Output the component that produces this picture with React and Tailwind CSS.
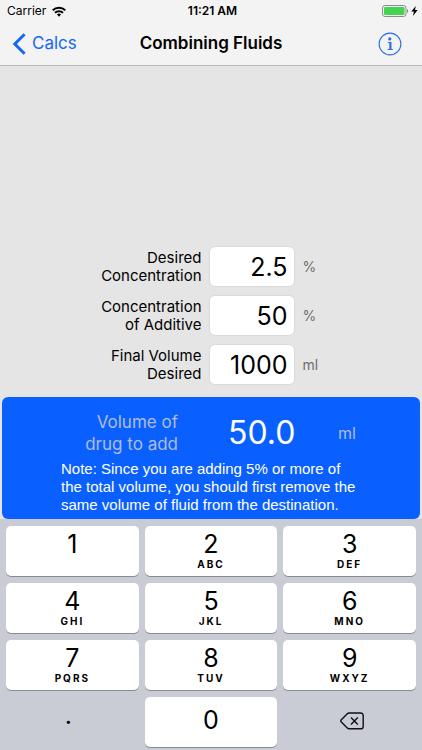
import { useState } from "react";

const FIELDS = [
  { id: "desired", lines: ["Desired", "Concentration"], unit: "%" },
  { id: "additive", lines: ["Concentration", "of Additive"], unit: "%" },
  { id: "volume", lines: ["Final Volume", "Desired"], unit: "ml" },
];

const KEYS = [
  { digit: "1", letters: "" },
  { digit: "2", letters: "ABC" },
  { digit: "3", letters: "DEF" },
  { digit: "4", letters: "GHI" },
  { digit: "5", letters: "JKL" },
  { digit: "6", letters: "MNO" },
  { digit: "7", letters: "PQRS" },
  { digit: "8", letters: "TUV" },
  { digit: "9", letters: "WXYZ" },
];

function StatusBar() {
  return (
    <div className="grid h-[22px] grid-cols-3 items-center pr-1 pl-[7px] text-xs">
      <div className="flex items-center gap-[6px]">
        <span>Carrier</span>
        <svg width="14" height="11" viewBox="0 0 14 11" aria-hidden="true">
          <g fill="none" stroke="#000" strokeWidth="2">
            <path d="M0.7 4.2a9 9 0 0 1 12.6 0" />
            <path d="M3 6.8a5.7 5.7 0 0 1 8 0" />
          </g>
          <path d="M7 10.8L4.9 8.6a3 3 0 0 1 4.2 0z" />
        </svg>
      </div>
      <span className="text-center font-semibold">11:21 AM</span>
      <div className="flex items-center justify-end gap-[2px]">
        <svg width="27" height="12" viewBox="0 0 27 12" aria-hidden="true">
          <rect x="0.5" y="0.5" width="23.5" height="11" rx="2.5" fill="none" stroke="#8c8c8c" />
          <rect x="2" y="2" width="20.5" height="8" rx="1.3" fill="#43d551" />
          <path d="M25 4v4c1.6-0.8 1.6-3.2 0-4z" fill="#8c8c8c" />
        </svg>
        <svg width="7" height="10" viewBox="0 0 7 10" aria-hidden="true">
          <path d="M4.8 0L0.3 5.6h2.6L1.9 10l4.8-5.9H4z" />
        </svg>
      </div>
    </div>
  );
}

function NavBar() {
  return (
    <nav className="grid h-[43px] grid-cols-[1fr_auto_1fr] items-center px-3">
      <a href="#calcs" className="flex items-center gap-[6px] text-[17px] text-[#1468f5]">
        <svg width="14" height="22" viewBox="0 0 14 22" fill="none" aria-hidden="true">
          <path d="M12.6 1.2L2.8 11l9.8 9.8" stroke="#1468f5" strokeWidth="3" />
        </svg>
        Calcs
      </a>
      <h1 className="text-[17px] font-semibold">Combining Fluids</h1>
      <button type="button" aria-label="Info" className="mr-2 justify-self-end">
        <svg width="24" height="24" viewBox="0 0 24 24" fill="none" stroke="#2a6fe8">
          <circle cx="12" cy="12" r="10.9" strokeWidth="1.1" />
          <circle cx="11.8" cy="6.9" r="1.6" fill="#2a6fe8" stroke="none" />
          <path d="M12.4 10v7.6" strokeWidth="2.2" />
          <path d="M9.8 10.4h3M9.6 17.5h5.2" strokeWidth="1" />
        </svg>
      </button>
    </nav>
  );
}

function Keypad({ onKey, onDelete }) {
  return (
    <div className="grid grid-cols-3 gap-x-[6px] gap-y-[7px] bg-[#c9cbd5] px-[6px] pt-[7px] pb-[3px]">
      {KEYS.map((key) => (
        <button
          key={key.digit}
          type="button"
          onClick={() => onKey(key.digit)}
          className="flex h-[50px] flex-col items-center rounded-[5px] bg-white pt-1 shadow-[0_1px_0_#898b90]"
        >
          <span className="text-[25px] leading-7">{key.digit}</span>
          <span className="text-[10px] leading-3 font-bold tracking-[2px]">{key.letters}</span>
        </button>
      ))}
      <button type="button" onClick={() => onKey(".")} className="h-[50px] pr-2 pb-3 text-[25px]">
        .
      </button>
      <button
        type="button"
        onClick={() => onKey("0")}
        className="h-[50px] rounded-[5px] bg-white pb-[2px] text-[25px] shadow-[0_1px_0_#898b90]"
      >
        0
      </button>
      <button
        type="button"
        aria-label="Delete"
        onClick={onDelete}
        className="flex h-[50px] items-center justify-center pb-[2px] pl-1"
      >
        <svg width="24" height="18" viewBox="0 0 24 18" fill="none" stroke="#111" strokeWidth="1.4">
          <path
            d="M9 1h11.8a2.4 2.4 0 0 1 2.4 2.4v11a2.4 2.4 0 0 1-2.4 2.4H9a2.4 2.4 0 0 1-1.7-0.7L1.3 10a1.6 1.6 0 0 1 0-2.2L7.3 1.7A2.4 2.4 0 0 1 9 1z"
            strokeLinejoin="round"
          />
          <path d="M11 5.6l6.8 6.8M17.8 5.6L11 12.4" />
        </svg>
      </button>
    </div>
  );
}

function App() {
  const [values, setValues] = useState({ desired: "2.5", additive: "50", volume: "1000" });
  const [active, setActive] = useState("desired");

  const setField = (id, value) => setValues({ ...values, [id]: value });

  const result = (Number(values.desired) * Number(values.volume)) / Number(values.additive);
  const needsNote = result >= Number(values.volume) * 0.05;

  return (
    <div className="flex min-h-screen flex-col bg-[#e5e5e5] font-[Inter,sans-serif] text-black">
      <header className="border-b border-[#b9b9b9] bg-[#f3f3f3]">
        <StatusBar />
        <NavBar />
      </header>

      <main className="flex flex-1 flex-col justify-end">
        <form className="mb-3 flex flex-col items-center gap-2">
          {FIELDS.map((field) => (
            <div key={field.id} className="flex items-center">
              <label htmlFor={field.id} className="w-[110px] text-right text-[15px] leading-[18px]">
                {field.lines[0]}
                <br />
                {field.lines[1]}
              </label>
              <input
                id={field.id}
                type="text"
                inputMode="decimal"
                value={values[field.id]}
                onFocus={() => setActive(field.id)}
                onChange={(e) => setField(field.id, e.target.value)}
                className="mr-2 ml-[7px] h-[41px] w-[86px] rounded-md border border-[#dadada] bg-white px-[6px] text-right text-[25px] outline-none"
              />
              <span className="w-7 text-sm text-[#6e6e6e]">{field.unit}</span>
            </div>
          ))}
        </form>

        <section className="mx-[2px] rounded-md bg-[#0a60ff] pt-[14px] pb-[5px]">
          <div className="flex items-center justify-center">
            <p className="w-28 text-right text-[17px] leading-[22px] text-[#afbcdb]">
              Volume of
              <br />
              drug to add
            </p>
            <output className="ml-[50px] w-[110px] text-[32px] leading-10 text-white">
              {Number.isFinite(result) ? result.toFixed(1) : ""}
            </output>
            <span className="w-[18px] text-base text-[#afbcdb]">ml</span>
          </div>
          {needsNote && (
            <p className="mx-auto mt-[5px] w-[300px] font-['Liberation_Sans',sans-serif] text-[15px] leading-[18px] text-white">
              Note: Since you are adding 5% or more of
              <br />
              the total volume, you should first remove the
              <br />
              same volume of fluid from the destination.
            </p>
          )}
        </section>
      </main>

      <Keypad
        onKey={(key) => setField(active, values[active] + key)}
        onDelete={() => setField(active, values[active].slice(0, -1))}
      />
    </div>
  );
}

export default App;
